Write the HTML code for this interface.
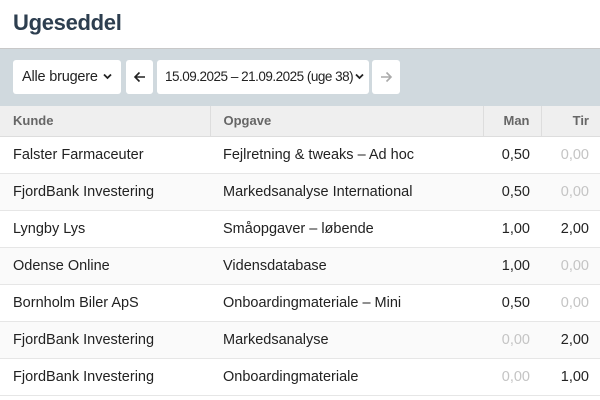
<!DOCTYPE html>
<html><head><meta charset="utf-8"><style>
*{margin:0;padding:0;box-sizing:border-box}
body{width:600px;height:400px;overflow:hidden;background:#fff;font-family:"Liberation Sans",sans-serif;color:#222}
.title{height:49px;border-bottom:1px solid #c8c8c8;padding:10px 13px;font-size:22px;color:#2d3e4f;font-weight:bold;letter-spacing:-0.3px}
.bar{position:absolute;top:49px;left:0;width:600px;height:57px;background:#d0d9de}
.c{position:absolute;top:11px;height:34px;background:#fff;border-radius:3px;font-size:14.5px;line-height:34px;white-space:nowrap;overflow:hidden}
.c svg{position:absolute;top:13px}
table{position:absolute;top:106px;left:0;width:600px;border-collapse:collapse;font-size:14.5px}
th{height:30px;background:#efefef;color:#666;font-weight:bold;font-size:13px;text-align:left;padding:0 13px;border-right:1px solid #ddd;border-bottom:1px solid #ddd}
td{height:37px;padding:0 11px 0 13px;border-bottom:1px solid #e6e6e6;white-space:nowrap}
tr:nth-child(odd) td{background:#fafafa}
td.r{text-align:right;padding-right:11px;padding-left:0}.g{color:#c4c4c4}
</style></head><body>
<div class="title">Ugeseddel</div>
<div class="bar">
<div class="c" style="left:13px;width:108px;padding-left:9px;letter-spacing:-0.2px">Alle brugere<svg style="right:9px" width="9" height="7" viewBox="0 0 9 7"><path d="M1 1.5l3.5 3.5 3.5-3.5" fill="none" stroke="#222" stroke-width="1.8"/></svg></div>
<div class="c" style="left:126px;width:27px"><svg style="left:7px;top:11px" width="13" height="12" viewBox="0 0 13 12"><path d="M12 6H2M6.5 1.5L2 6l4.5 4.5" fill="none" stroke="#222" stroke-width="1.6"/></svg></div>
<div class="c" style="left:157px;width:212px;padding-left:8px;font-size:13.5px;letter-spacing:-0.5px">15.09.2025 – 21.09.2025 (uge 38)<svg style="right:5px" width="9" height="7" viewBox="0 0 9 7"><path d="M1 1.5l3.5 3.5 3.5-3.5" fill="none" stroke="#222" stroke-width="1.8"/></svg></div>
<div class="c" style="left:372px;width:28px"><svg style="left:8px;top:11px" width="13" height="12" viewBox="0 0 13 12"><path d="M1 6h10M6.5 1.5L11 6l-4.5 4.5" fill="none" stroke="#aaa" stroke-width="1.6"/></svg></div>
</div>
<table>
<tr><th style="width:210px">Kunde</th><th style="width:273px">Opgave</th><th style="width:58px;text-align:right;padding-right:11px">Man</th><th style="text-align:right;border-right:0;padding-right:11px">Tir</th></tr>
<tr><td>Falster Farmaceuter</td><td>Fejlretning &amp; tweaks – Ad hoc</td><td class="r">0,50</td><td class="r g">0,00</td></tr>
<tr><td>FjordBank Investering</td><td>Markedsanalyse International</td><td class="r">0,50</td><td class="r g">0,00</td></tr>
<tr><td>Lyngby Lys</td><td>Småopgaver – løbende</td><td class="r">1,00</td><td class="r">2,00</td></tr>
<tr><td>Odense Online</td><td>Vidensdatabase</td><td class="r">1,00</td><td class="r g">0,00</td></tr>
<tr><td>Bornholm Biler ApS</td><td>Onboardingmateriale – Mini</td><td class="r">0,50</td><td class="r g">0,00</td></tr>
<tr><td>FjordBank Investering</td><td>Markedsanalyse</td><td class="r g">0,00</td><td class="r">2,00</td></tr>
<tr><td>FjordBank Investering</td><td>Onboardingmateriale</td><td class="r g">0,00</td><td class="r">1,00</td></tr>
</table>
</body></html>
